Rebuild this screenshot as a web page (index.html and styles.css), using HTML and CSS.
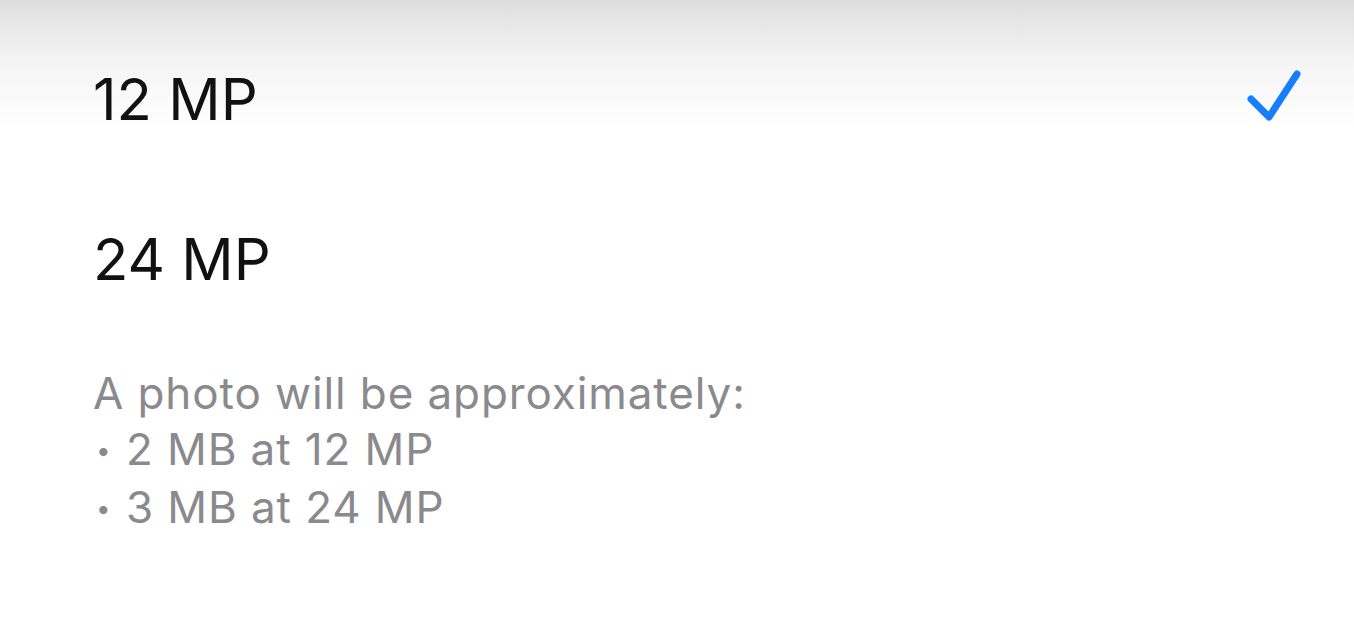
FILE: index.html
```html
<!DOCTYPE html>
<html lang="en">
<head>
    <meta charset="UTF-8">
    <meta name="viewport" content="width=device-width, initial-scale=1.0">
    <title>Resolution</title>
    <link rel="stylesheet" href="styles.css">
</head>
<body>

<div class="settings-page">
    <div class="option-list">
        <div class="option selected">
            <span class="option-label">12 MP</span>
            <svg class="check" viewBox="0 0 60 56" width="60" height="56">
                <path d="M7 31 L25 49 L53 6" fill="none" stroke="#147efb" stroke-width="7" stroke-linecap="round" stroke-linejoin="round"/>
            </svg>
        </div>
        <div class="option">
            <span class="option-label">24 MP</span>
        </div>
    </div>

    <div class="footnote">
        <p>A photo will be approximately:</p>
        <p><span class="bullet">&bull;</span>2 MB at 12 MP</p>
        <p><span class="bullet">&bull;</span>3 MB at 24 MP</p>
    </div>
</div>

</body>
</html>
```

FILE: styles.css
```css
body {
    margin: 0;
    font-family: Inter, "Noto Sans", sans-serif;
    background: #fff;
}

.settings-page {
    box-sizing: border-box;
    height: 624px;
    overflow: hidden;
    background: linear-gradient(to bottom, #dedede 0px, #f4f4f4 60px, #fdfdfd 115px, #fff 130px);
    padding: 19px 50px 0 93px;
}

.option {
    display: flex;
    align-items: center;
    justify-content: space-between;
    height: 160px;
}

.option-label {
    font-size: 58px;
    color: #111;
}

.check {
    display: block;
    margin-bottom: 6px;
}

.footnote {
    margin-top: 26px;
    color: #8a8a8e;
    font-size: 44px;
    line-height: 56px;
    letter-spacing: 0.9px;
}

.footnote p {
    margin: 0;
}

.bullet {
    display: inline-block;
    font-size: 26px;
    width: 30px;
    padding-left: 3px;
    vertical-align: 5px;
}
```
